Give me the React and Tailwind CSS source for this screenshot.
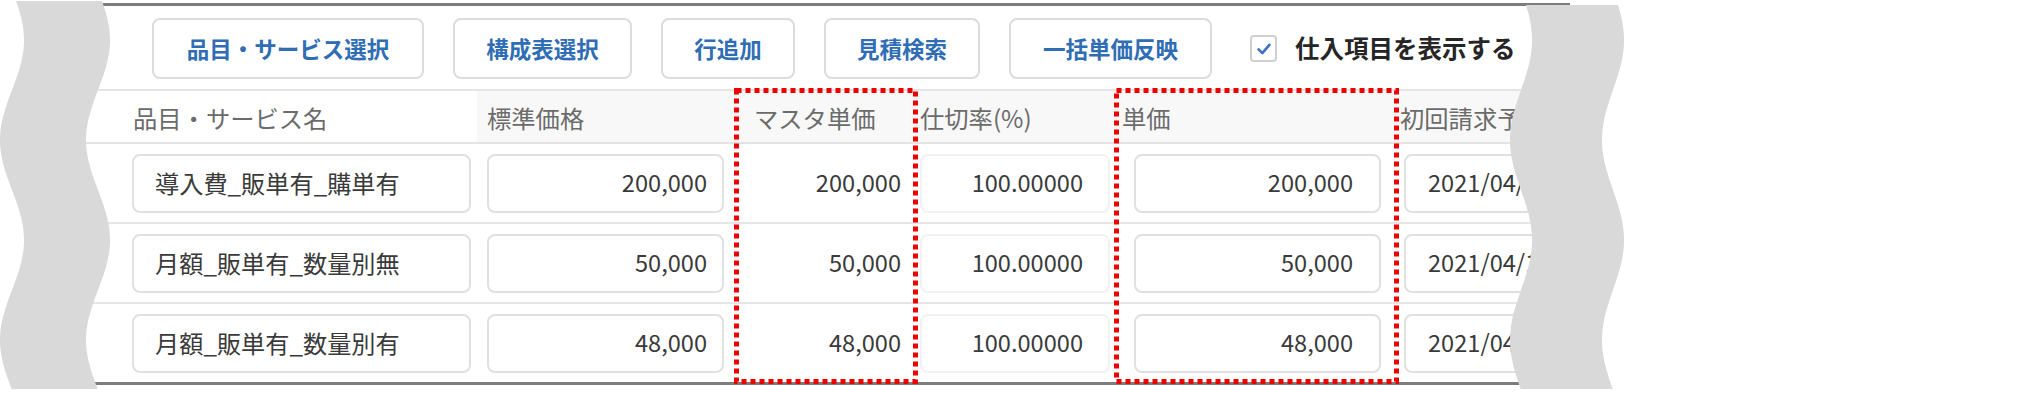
const buttons = [
  { label: "品目・サービス選択", w: "w-[272px]" },
  { label: "構成表選択", w: "w-[179px]" },
  { label: "行追加", w: "w-[134px]" },
  { label: "見積検索", w: "w-[156px]" },
  { label: "一括単価反映", w: "w-[203px]" },
];

const rows = [
  { name: "導入費_販単有_購単有", std: "200,000", master: "200,000", rate: "100.00000", price: "200,000", date: "2021/04/01" },
  { name: "月額_販単有_数量別無", std: "50,000", master: "50,000", rate: "100.00000", price: "50,000", date: "2021/04/10" },
  { name: "月額_販単有_数量別有", std: "48,000", master: "48,000", rate: "100.00000", price: "48,000", date: "2021/04/01" },
];

const cols = "grid grid-cols-[407px_257px_184px_196px_284px_172px]";

// wavy "cut" band, sampled along y
const wave = (cx, half, amp, top) => {
  const left = [];
  const right = [];
  for (let y = top; y <= 389; y += 4) {
    const c = cx + amp * Math.sin((2 * Math.PI * (y + 10)) / 200);
    left.push(`${(c - half).toFixed(1)},${y}`);
    right.unshift(`${(c + half).toFixed(1)},${y}`);
  }
  return `M${left.join(" L")} L${right.join(" L")} Z`;
};

const Toolbar = () => (
  <div className="flex h-[85px] items-start border-b-2 border-[#e4e4e4] pl-[82px] pt-[12px]">
    <div className="flex h-[61px] items-center gap-[29px]">
      {buttons.map((b) => (
        <button
          key={b.label}
          className={`${b.w} flex h-[61px] items-center justify-center rounded-[8px] border-2 border-[#dcdcdc] bg-white text-[22.5px] font-bold text-[#2f6db5]`}
        >
          {b.label}
        </button>
      ))}
      <div className="ml-[9px] flex items-center">
        <span className="flex h-[27px] w-[27px] items-center justify-center rounded-[4px] border-2 border-[#d0d0d0] bg-white">
          <svg width="20" height="20" viewBox="0 0 24 24" fill="none">
            <path d="M5.5 12.5l4.5 4.5 8.5-10" stroke="#3c73c4" strokeWidth="3.2" strokeLinecap="round" strokeLinejoin="round" />
          </svg>
        </span>
        <span className="ml-[18px] text-[24.5px] font-bold text-[#262626]">仕入項目を表示する</span>
      </div>
    </div>
  </div>
);

const Header = () => (
  <div className={`${cols} h-[53px] border-b-2 border-[#e4e4e4] text-[24.3px] text-[#6b6b6b]`}>
    <div className="flex items-center bg-white pl-[63px] pt-[3px]">品目・サービス名</div>
    <div className="flex items-center bg-[#f8f8f8] pl-[10px] pt-[3px]">標準価格</div>
    <div className="flex items-center bg-[#f8f8f8] pl-[20px] pt-[3px]">マスタ単価</div>
    <div className="flex items-center bg-[#f8f8f8] pl-[2px] pt-[3px]">仕切率(%)</div>
    <div className="flex items-center bg-[#f8f8f8] pl-[8px] pt-[3px]">単価</div>
    <div className="flex items-center whitespace-nowrap bg-[#f8f8f8] pl-[2px] pt-[3px]">初回請求予定日</div>
  </div>
);

const Row = ({ r, last }) => (
  <div className={`${cols} items-center text-[23.6px] text-[#3a3a3a] ${last ? "h-[78px]" : "h-[80px] border-b-2 border-[#e6e6e6]"}`}>
    <div className="ml-[62px] flex h-[59px] w-[339px] items-center rounded-[8px] border-2 border-[#e0e0e0] pl-[21px] text-[24.2px]">{r.name}</div>
    <div className="ml-[10px] flex h-[59px] w-[237px] items-center justify-end rounded-[8px] border-2 border-[#e0e0e0] pr-[15px]">{r.std}</div>
    <div className="flex h-[59px] items-center justify-end pr-[17px]">{r.master}</div>
    <div className="ml-[2px] flex h-[59px] w-[190px] items-center justify-end rounded-[8px] border-2 border-[#f1f1f1] pr-[25px]">{r.rate}</div>
    <div className="ml-[20px] flex h-[59px] w-[247px] items-center justify-end rounded-[8px] border-2 border-[#e0e0e0] pr-[26px]">{r.price}</div>
    <div className="ml-[6px] flex h-[59px] w-[200px] items-center whitespace-nowrap rounded-[8px] border-2 border-[#e0e0e0] pl-[22px]">{r.date}</div>
  </div>
);

const Overlay = () => (
  <svg className="pointer-events-none absolute left-0 top-0" width="2027" height="393" viewBox="0 0 2027 393">
    <path d={wave(55, 43, 12, 1)} fill="#d9d9d9" />
    <path d={wave(1567, 46, 11, 5)} fill="#d9d9d9" />
    <rect x="736.5" y="90.5" width="179" height="291" fill="none" stroke="#ee0000" strokeWidth="5" strokeDasharray="5 4" />
    <rect x="1116.5" y="90.5" width="280" height="291" fill="none" stroke="#ee0000" strokeWidth="5" strokeDasharray="5 4" />
  </svg>
);

export default function App() {
  return (
    <div className="relative h-[393px] w-[2027px] overflow-hidden bg-white [font-family:'Noto_Sans_CJK_JP','Noto_Sans',sans-serif]">
      <div className="ml-[70px] mt-[3px] w-[1500px] overflow-hidden border-y-[3px] border-[#7d7d7d]">
        <Toolbar />
        <Header />
        {rows.map((r, i) => (
          <Row key={i} r={r} last={i === rows.length - 1} />
        ))}
      </div>
      <Overlay />
    </div>
  );
}
